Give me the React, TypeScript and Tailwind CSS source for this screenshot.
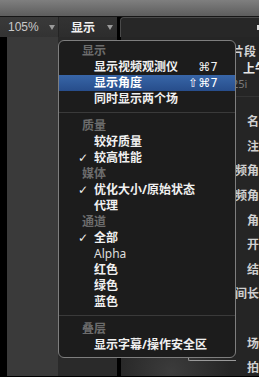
import React from "react";

type Row =
  | { kind: "header"; label: string }
  | { kind: "item"; label: string; check?: boolean; shortcut?: string; active?: boolean; latin?: boolean }
  | { kind: "sep" };

const rows: Row[] = [
  { kind: "header", label: "显示" },
  { kind: "item", label: "显示视频观测仪", shortcut: "⌘7" },
  { kind: "item", label: "显示角度", shortcut: "⇧⌘7", active: true },
  { kind: "item", label: "同时显示两个场" },
  { kind: "sep" },
  { kind: "header", label: "质量" },
  { kind: "item", label: "较好质量" },
  { kind: "item", label: "较高性能", check: true },
  { kind: "header", label: "媒体" },
  { kind: "item", label: "优化大小/原始状态", check: true },
  { kind: "item", label: "代理" },
  { kind: "header", label: "通道" },
  { kind: "item", label: "全部", check: true },
  { kind: "item", label: "Alpha", latin: true },
  { kind: "item", label: "红色" },
  { kind: "item", label: "绿色" },
  { kind: "item", label: "蓝色" },
  { kind: "sep" },
  { kind: "header", label: "叠层" },
  { kind: "item", label: "显示字幕/操作安全区" },
];

const labels = ["名称", "注释", "视频角度", "音频角度", "角度", "开始", "结束", "时间长度", "卷", "场景", "拍摄"];

function Caret() {
  return (
    <svg width="6" height="5" viewBox="0 0 6 5" className="shrink-0">
      <path d="M0 0 H6 L3 5 Z" fill="#9a9a9a" />
    </svg>
  );
}

export default function App() {
  return (
    <div className="relative w-[259px] h-[377px] overflow-hidden bg-black font-['Noto_Sans','Noto_Sans_CJK_SC',sans-serif] select-none">
      {/* title gradient */}
      <div className="h-[17px] bg-gradient-to-b from-[#7f7f7f] to-[#5d5d5d] border-b border-[#161616]" />
      {/* toolbar */}
      <div className="flex h-[20px]">
        <div className="w-[58px] shrink-0 bg-gradient-to-b from-[#3a3a3a] to-[#333333] flex items-center pl-[8px]">
          <span className="font-['Liberation_Sans',sans-serif] text-[12px] leading-none text-[#c9c9c9]">105%</span>
          <span className="ml-[10px]"><Caret /></span>
        </div>
        <div className="w-[59px] shrink-0 bg-gradient-to-b from-[#333333] to-[#2d2d2d] border-l border-[#242424] flex items-center pl-[12px]">
          <span className="font-['Noto_Sans_CJK_SC',sans-serif] font-bold text-[12px] leading-none text-[#f2f2f2]">显示</span>
          <span className="ml-[12px]"><Caret /></span>
        </div>
        <div className="w-[3px] shrink-0 bg-black" />
        <div className="flex-1 min-w-0 bg-[#272727] rounded-tl-[4px] border-t border-l border-[#4a4a4a] flex justify-end items-center">
          <div className="w-[2px] h-[5px] bg-[#dcdcdc]" />
        </div>
      </div>
      {/* body */}
      <div className="flex h-[339px]">
        <div className="w-[7px] shrink-0 bg-black" />
        <div className="w-[51px] shrink-0 bg-[#3a3a3a]" />
        <div className="w-[59px] shrink-0 bg-[#2a2a2a]" />
        <div className="w-[4px] shrink-0 bg-black" />
        <div className="flex-1 min-w-0 overflow-hidden bg-[radial-gradient(circle_at_50px_335px,#3c3c3c,#252525_60px)] flex flex-col">
          <div className="h-[60px] shrink-0 border-b border-[#333333] flex flex-col">
            <div className="h-[7px]" />
            <div className="pl-[111px] h-[16px] flex items-center text-[12px] font-bold text-[#d4d4d4] whitespace-nowrap">片段</div>
            <div className="pl-[122px] h-[18px] flex items-center text-[12px] font-bold text-[#e6e6e6] whitespace-nowrap">上午</div>
            <div className="pl-[111px] h-[13px] flex items-center text-[11px] text-[#7a7a7a] whitespace-nowrap">25i</div>
          </div>
          <div className="h-[13px] shrink-0" />
          <div className="w-[150px] shrink-0 flex flex-col">
            {labels.map((l) => (
              <div key={l} className="h-[24.6px] shrink-0 flex items-center justify-end text-[12px] font-bold text-[#cfcfcf] whitespace-nowrap">
                {l}
              </div>
            ))}
          </div>
        </div>
      </div>

      {/* bit of a window behind the menu */}
      <div className="absolute left-[188px] top-[350px] w-[48px] h-[11px] border-l border-b border-[#9a9a9a] rounded-bl-[2px]" />

      {/* menu */}
      <div className="absolute left-[58px] top-[40px] w-[178px] h-[318px] rounded-[6px] border border-[#7e7e7e] bg-[#1c1c1c] pt-[2px] flex flex-col">
        {rows.map((r, i) => {
          if (r.kind === "sep") {
            return (
              <div key={i} className="h-[11px] flex items-center">
                <div className="h-px w-full bg-[#3a3a3a]" />
              </div>
            );
          }
          if (r.kind === "header") {
            return (
              <div key={i} className="h-[16px] flex items-center pl-[23px] text-[12px] font-bold leading-none text-[#6c6c6c]">
                {r.label}
              </div>
            );
          }
          return (
            <div
              key={i}
              className={
                r.active
                  ? "h-[16px] flex items-center pl-[19px] pr-[17px] bg-gradient-to-b from-[#3866a8] to-[#274d8b] text-white"
                  : "h-[16px] flex items-center pl-[19px] pr-[17px] text-[#f0f0f0]"
              }
            >
              <span className="w-[16px] shrink-0 font-['DejaVu_Sans',sans-serif] text-[12px] font-bold leading-none">
                {r.check ? "✓" : ""}
              </span>
              <span
                className={
                  r.latin
                    ? "flex-1 text-[12px] font-normal leading-none text-[#dedede] whitespace-nowrap"
                    : "flex-1 text-[12px] font-bold leading-none whitespace-nowrap"
                }
              >
                {r.label}
              </span>
              {r.shortcut ? (
                <span className="font-['DejaVu_Sans',sans-serif] text-[12px] leading-none whitespace-nowrap">{r.shortcut}</span>
              ) : null}
            </div>
          );
        })}
      </div>
    </div>
  );
}
